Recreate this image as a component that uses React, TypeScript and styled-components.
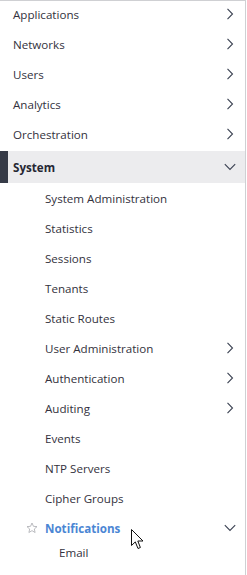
import React from 'react'
import styled, { createGlobalStyle } from 'styled-components'

type SubItem = {
  label: string
  hasChildren?: boolean
}

const topItems = ['Applications', 'Networks', 'Users', 'Analytics', 'Orchestration']

const systemItems: SubItem[] = [
  { label: 'System Administration' },
  { label: 'Statistics' },
  { label: 'Sessions' },
  { label: 'Tenants' },
  { label: 'Static Routes' },
  { label: 'User Administration', hasChildren: true },
  { label: 'Authentication', hasChildren: true },
  { label: 'Auditing', hasChildren: true },
  { label: 'Events' },
  { label: 'NTP Servers' },
  { label: 'Cipher Groups' },
]

const ChevronRight = () => (
  <svg width='8' height='12' viewBox='0 0 8 12'>
    <polyline points='1.5,0.8 6.5,6 1.5,11.2' fill='none' stroke='#3b4252' strokeWidth='1.1' />
  </svg>
)

const ChevronDown = () => (
  <svg width='12' height='8' viewBox='0 0 12 8'>
    <polyline points='0.8,1.2 6,6.4 11.2,1.2' fill='none' stroke='#3b4252' strokeWidth='1.1' />
  </svg>
)

const StarIcon = () => (
  <svg width='12' height='12' viewBox='0 0 24 24'>
    <polygon
      points='12,2 14.9,8.6 22,9.3 16.6,14 18.2,21 12,17.3 5.8,21 7.4,14 2,9.3 9.1,8.6'
      fill='none'
      stroke='#a9abb0'
      strokeWidth='1.6'
      strokeLinejoin='round'
    />
  </svg>
)

const Cursor = () => (
  <svg width='13' height='21' viewBox='0 0 13 21'>
    <path
      d='M0.5,0.5 L0.5,16.5 L4.3,12.9 L7,19.5 L9.4,18.5 L6.8,12 L12,12 Z'
      fill='#ffffff'
      stroke='#111111'
      strokeWidth='1'
      strokeLinejoin='miter'
    />
  </svg>
)

const App = () => {
  return (
    <>
      <GlobalStyle />
      <Nav>
        <List>
          {topItems.map((label) => (
            <TopRow key={label}>
              <Label>{label}</Label>
              <IconSlot>
                <ChevronRight />
              </IconSlot>
            </TopRow>
          ))}
          <ActiveRow>
            <ActiveLabel>System</ActiveLabel>
            <IconSlot>
              <ChevronDown />
            </IconSlot>
          </ActiveRow>
          {systemItems.map((item) => (
            <SubRow key={item.label}>
              <Label>{item.label}</Label>
              {item.hasChildren && (
                <IconSlot>
                  <ChevronRight />
                </IconSlot>
              )}
            </SubRow>
          ))}
          <SubRow>
            <StarSlot>
              <StarIcon />
            </StarSlot>
            <OpenLabel>Notifications</OpenLabel>
            <IconSlot>
              <ChevronDown />
            </IconSlot>
            <CursorMark>
              <Cursor />
            </CursorMark>
          </SubRow>
          <LeafRow>
            <Label>Email</Label>
          </LeafRow>
        </List>
      </Nav>
    </>
  )
}

export default App

const GlobalStyle = createGlobalStyle`
  html, body {
    margin: 0;
    padding: 0;
    background: #ffffff;
  }
  body {
    font-family: 'Open Sans', 'Noto Sans', sans-serif;
    -webkit-font-smoothing: antialiased;
  }
`

const Nav = styled.nav`
  box-sizing: border-box;
  width: 246px;
  height: 575px;
  overflow: hidden;
  background: #ffffff;
  border-top: 1px solid #cfd0d3;
  border-right: 1px solid #cfd0d3;
`

const List = styled.div`
  display: flex;
  flex-direction: column;
  margin-top: -2px;
`

const Row = styled.div`
  position: relative;
  display: flex;
  align-items: center;
  height: 30px;
  box-sizing: border-box;
  padding-right: 8px;
`

const TopRow = styled(Row)`
  padding-left: 13px;
`

const ActiveRow = styled(Row)`
  height: 32px;
  margin-top: 2px;
  background: #ececee;
  border-left: 8px solid #363b47;
  padding-left: 5px;
`

const SubRow = styled(Row)`
  padding-left: 45px;
`

const LeafRow = styled(Row)`
  height: 24px;
  padding-left: 59px;
  margin-top: -3px;
`

const Label = styled.span`
  flex: 1;
  font-size: 11.6px;
  color: #33323d;
  white-space: nowrap;
`

const ActiveLabel = styled(Label)`
  font-weight: 700;
  color: #262833;
`

const OpenLabel = styled(Label)`
  font-weight: 700;
  color: #4b86d4;
`

const IconSlot = styled.span`
  display: flex;
  align-items: center;
  justify-content: center;
  width: 14px;
  height: 14px;
`

const StarSlot = styled.span`
  position: absolute;
  left: 26px;
  top: 9px;
  display: flex;
`

const CursorMark = styled.span`
  position: absolute;
  left: 131px;
  top: 16px;
  display: flex;
  pointer-events: none;
`
